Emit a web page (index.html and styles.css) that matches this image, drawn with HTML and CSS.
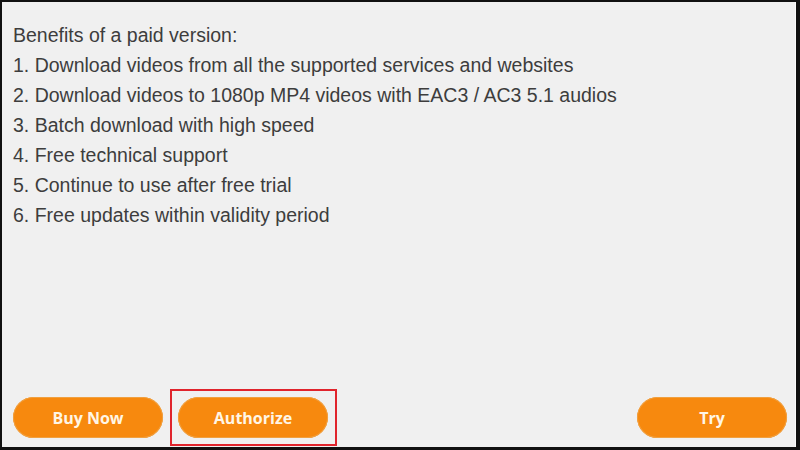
FILE: index.html
```html
<!DOCTYPE html>
<html>
<head>
<meta charset="utf-8">
<link rel="stylesheet" href="styles.css">
</head>
<body>
<div class="frame">
  <div class="panel">
    <div class="benefits">
      <p>Benefits of a paid version:</p>
      <p>1. Download videos from all the supported services and websites</p>
      <p>2. Download videos to 1080p MP4 videos with EAC3 / AC3 5.1 audios</p>
      <p>3. Batch download with high speed</p>
      <p>4. Free technical support</p>
      <p>5. Continue to use after free trial</p>
      <p>6. Free updates within validity period</p>
    </div>
    <div class="actions">
      <button class="btn">Buy Now</button>
      <div class="highlight"><button class="btn">Authorize</button></div>
      <div class="spacer"></div>
      <button class="btn">Try</button>
    </div>
  </div>
</div>
</body>
</html>
```
FILE: styles.css
```css
html, body {
  margin: 0;
  padding: 0;
  background: #000;
}
.frame {
  width: 800px;
  height: 450px;
  box-sizing: border-box;
  border-left: 2px solid #111;
  border-top: 2px solid #111;
  border-right: 4px solid #111;
  border-bottom: 3px solid #111;
  background: #000;
}
.panel {
  height: 100%;
  box-sizing: border-box;
  background: #f0f0f0;
  border-right: 1px solid #fafafa;
  display: flex;
  flex-direction: column;
  padding: 18px 0 0 11px;
}
.benefits p {
  margin: 0;
  font-family: "Liberation Sans", Arial, sans-serif;
  font-size: 19.5px;
  line-height: 30px;
  color: #3d3d3d;
}
.actions {
  margin-top: auto;
  display: flex;
  align-items: center;
  padding: 0 8px 1px 0;
}
.btn {
  width: 150px;
  height: 41px;
  border: none;
  border-radius: 21px;
  background: #f7890e;
  color: #fff6e6;
  font-family: "Open Sans", "DejaVu Sans", sans-serif;
  font-weight: 700;
  font-size: 16px;
  padding: 0;
  box-shadow: inset 0 0 0 1px #f0a040;
}
.highlight {
  margin-left: 7px;
  border: 2px solid #e0242c;
  padding: 6px 7px 6px 6px;
  display: flex;
}
.spacer {
  flex: 1;
}
```
